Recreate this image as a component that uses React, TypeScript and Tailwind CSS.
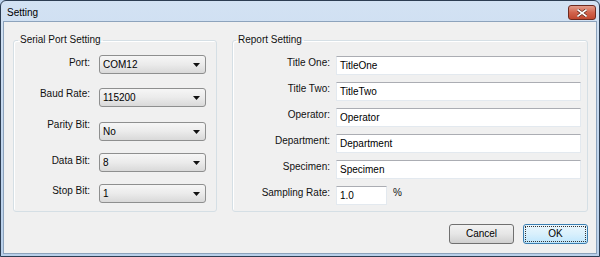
import React from 'react';

const font = { fontFamily: '"Liberation Sans", Arial, sans-serif' };

const serialRows = [
  { label: 'Port:', value: 'COM12', row: '', lab: 'pt-[2px]' },
  { label: 'Baud Rate:', value: '115200', row: 'mt-[14px]', lab: 'pt-0' },
  { label: 'Parity Bit:', value: 'No', row: 'mt-[15px]', lab: '-mt-[3px]' },
  { label: 'Data Bit:', value: '8', row: 'mt-[12px]', lab: 'pt-[2px]' },
  { label: 'Stop Bit:', value: '1', row: 'mt-[12px]', lab: 'pt-[1px]' },
];

const reportRows = [
  { label: 'Title One:', value: 'TitleOne' },
  { label: 'Title Two:', value: 'TitleTwo' },
  { label: 'Operator:', value: 'Operator' },
  { label: 'Department:', value: 'Department' },
  { label: 'Specimen:', value: 'Specimen' },
];

const ComboBox: React.FC<{ value: string }> = ({ value }) => (
  <div className="w-[107px] h-[19px] rounded-[3px] border border-[#8e8f8f] bg-gradient-to-b from-[#f6f6f6] via-[#ebebeb] to-[#d9d9d9] flex items-center justify-between pl-[3px] pr-[5px] text-[#000]">
    <span className="leading-[12px] pt-[1px]">{value}</span>
    <svg width="7" height="4" viewBox="0 0 7 4">
      <path d="M0 0 H7 L3.5 4 Z" fill="#111" />
    </svg>
  </div>
);

const TextBox: React.FC<{ value: string; className: string }> = ({ value, className }) => (
  <div
    className={`h-[19px] bg-white border border-[#e3e9ef] border-t-[#abadb3] flex items-center px-[3px] text-[#000] ${className}`}
  >
    <span className="leading-[12px]">{value}</span>
  </div>
);

const Button: React.FC<{ label: string; focused?: boolean }> = ({ label, focused }) => (
  <div
    className={`w-[65px] h-[20px] rounded-[3px] border flex items-center justify-center ${
      focused
        ? 'border-[#3c7fb1] bg-gradient-to-b from-[#eaf6fd] via-[#d9f0fc] to-[#bee6fd] p-[1px]'
        : 'border-[#707070] bg-gradient-to-b from-[#f2f2f2] via-[#e6e6e6] to-[#cfcfcf]'
    }`}
  >
    {focused ? (
      <div className="w-full h-full border border-dotted border-[#333] flex items-center justify-center">
        <span className="leading-[12px] text-[#000]">{label}</span>
      </div>
    ) : (
      <span className="leading-[12px] text-[#000]">{label}</span>
    )}
  </div>
);

const App: React.FC = () => {
  return (
    <div style={font} className="w-[600px] h-[257px] text-[10px] bg-[#bcd2ec]">
      <div className="w-full h-full border border-[#2d3d52] rounded-t-[6px] flex flex-col bg-gradient-to-b from-[#d3e2f3] via-[#c3d7ee] to-[#b9d0ea]">
        {/* title bar */}
        <div className="h-[20px] flex items-start justify-between">
          <span className="pl-[6px] pt-[6px] leading-[12px] text-[#000]">Setting</span>
          <div className="mt-[4px] mr-[3px] w-[28px] h-[15px] rounded-[3px] border border-[#6d2a20] bg-gradient-to-b from-[#e39d8c] via-[#d2644d] to-[#c0472f] flex items-center justify-center">
            <svg width="10" height="8" viewBox="0 0 10 8">
              <path d="M1 1 L9 7 M9 1 L1 7" stroke="#5a2218" strokeWidth="3" strokeLinecap="square" />
              <path d="M1 1 L9 7 M9 1 L1 7" stroke="#ffffff" strokeWidth="1.6" strokeLinecap="square" />
            </svg>
          </div>
        </div>

        {/* client area */}
        <div className="flex-1 mx-[2px] mb-[2px] border border-[#8da3bc] bg-[#f0f0f0] flex flex-col text-[#111]">
          <div className="flex mt-[12px] ml-[9px] gap-[15px]">
            <fieldset className="w-[204px] h-[178px] border border-[#d5dfe5] rounded-[3px] shadow-[inset_1px_1px_0_#ffffff]">
              <legend className="ml-[4px] px-[2px] leading-[12px]">Serial Port Setting</legend>
              <div className="flex flex-col pt-[9px]">
                {serialRows.map((r) => (
                  <div key={r.label} className={`flex items-start ${r.row}`}>
                    <span className={`w-[76px] text-right leading-[12px] ${r.lab}`}>{r.label}</span>
                    <div className="ml-[9px]">
                      <ComboBox value={r.value} />
                    </div>
                  </div>
                ))}
              </div>
            </fieldset>

            <fieldset className="w-[356px] h-[178px] border border-[#d5dfe5] rounded-[3px] shadow-[inset_1px_1px_0_#ffffff]">
              <legend className="ml-[3px] px-[2px] leading-[12px]">Report Setting</legend>
              <div className="flex flex-col gap-[7px] pt-[10px]">
                {reportRows.map((r) => (
                  <div key={r.label} className="flex items-start">
                    <span className="w-[97px] text-right leading-[12px] pt-[1px]">{r.label}</span>
                    <TextBox value={r.value} className="ml-[6px] w-[245px]" />
                  </div>
                ))}
                <div className="flex items-start">
                  <span className="w-[97px] text-right leading-[12px] pt-[1px]">Sampling Rate:</span>
                  <TextBox value="1.0" className="ml-[6px] w-[51px]" />
                  <span className="ml-[6px] leading-[12px] pt-[1px]">%</span>
                </div>
              </div>
            </fieldset>
          </div>

          <div className="flex justify-end gap-[9px] mt-[12px] mr-[8px]">
            <Button label="Cancel" />
            <Button label="OK" focused />
          </div>
        </div>
      </div>
    </div>
  );
};

export default App;
